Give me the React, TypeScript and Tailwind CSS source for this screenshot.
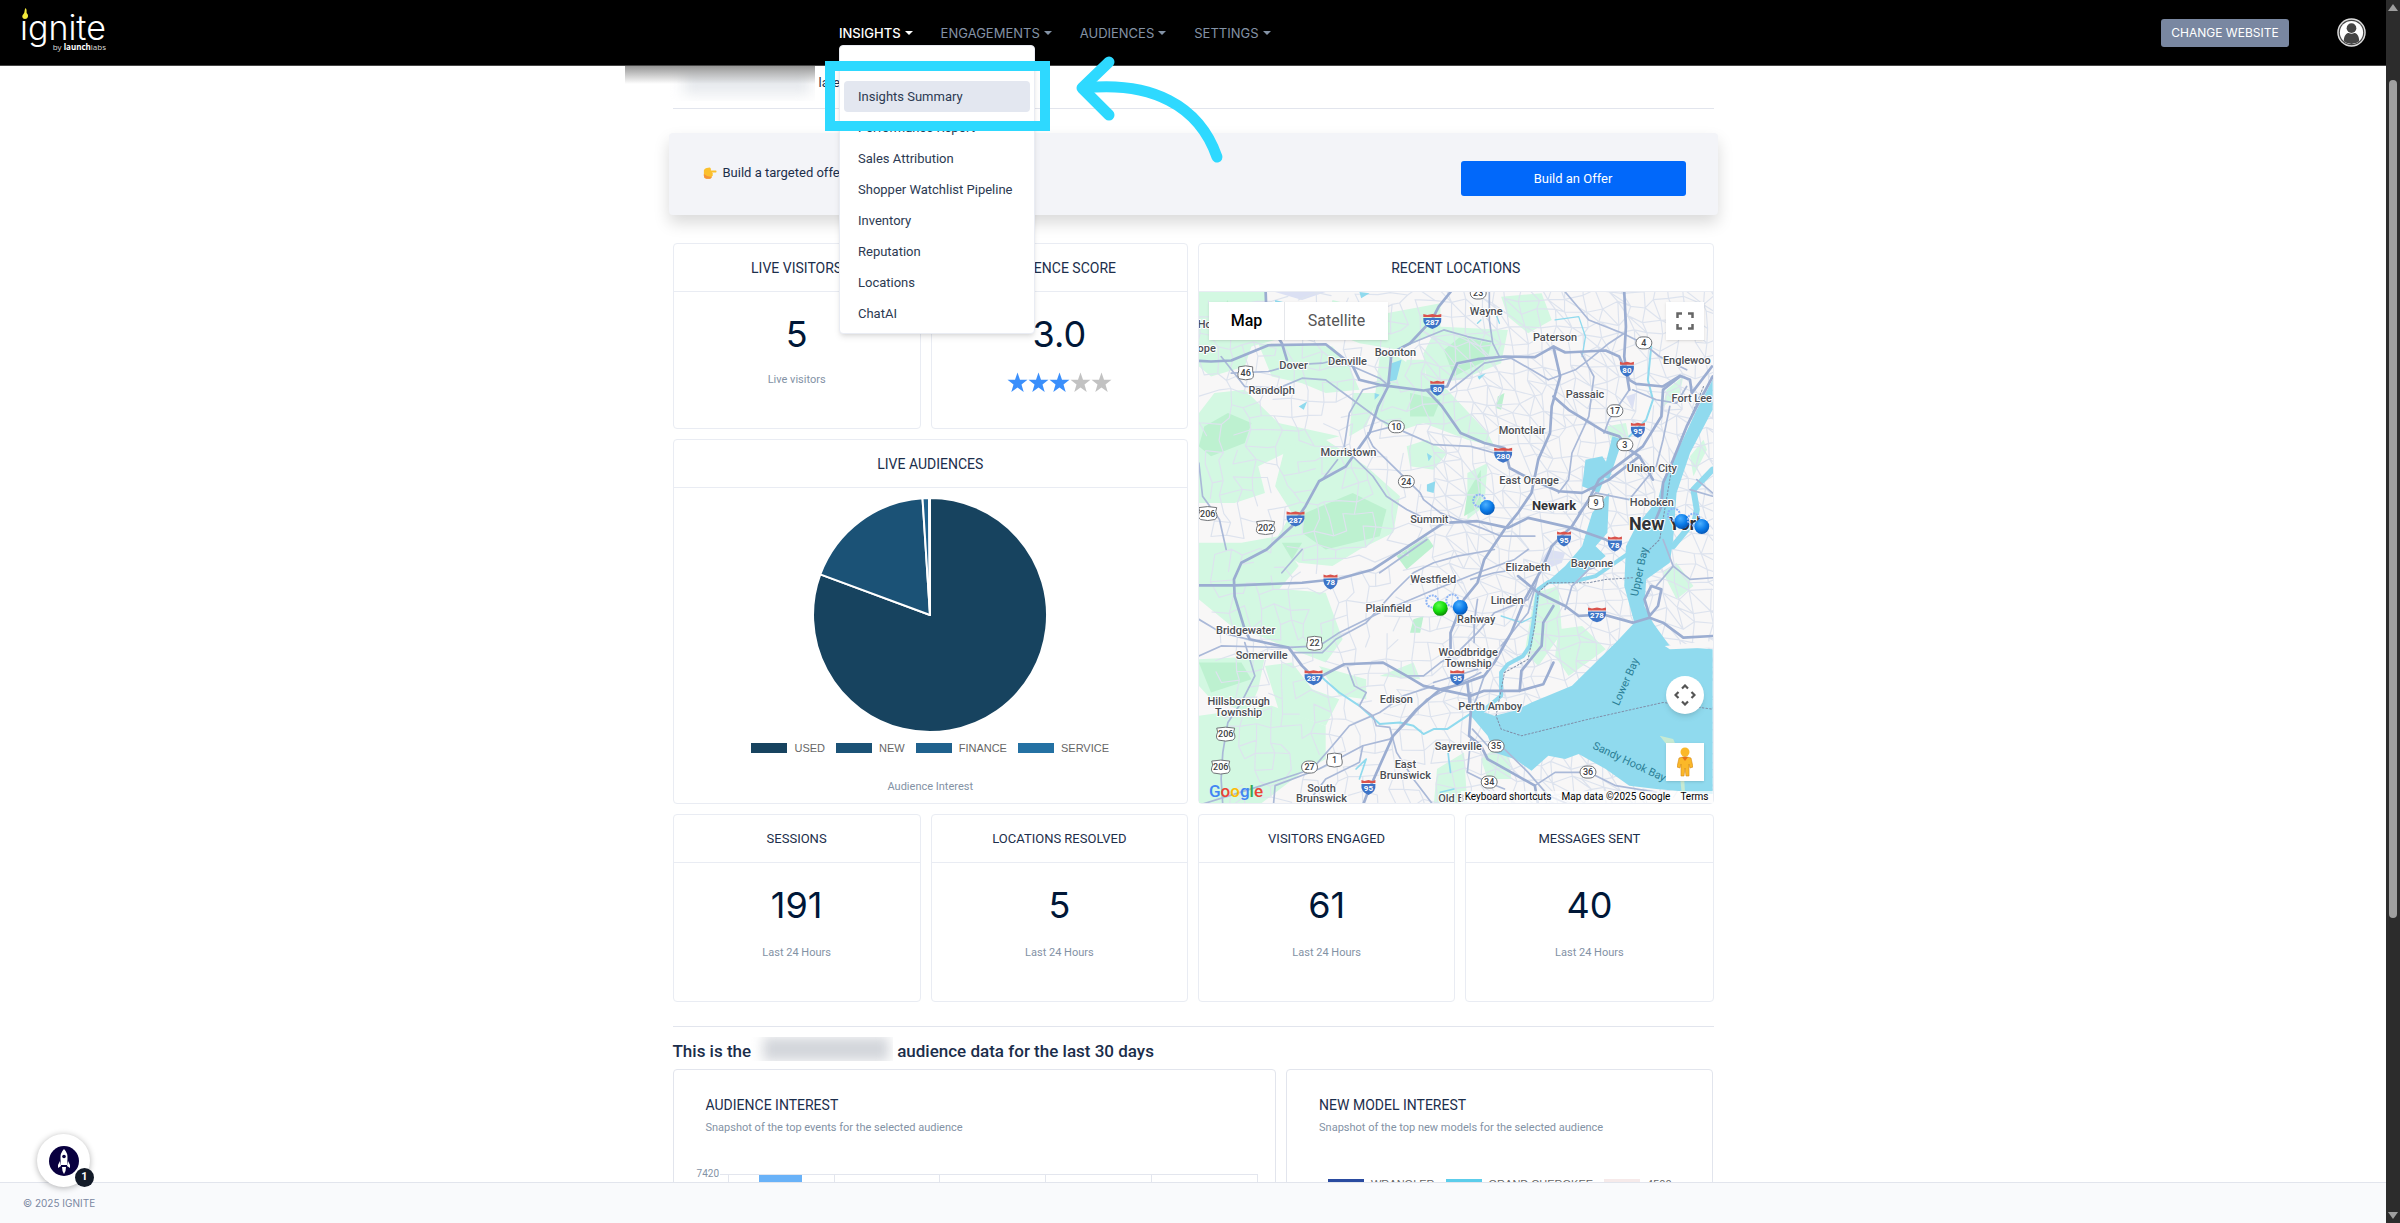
import type { ReactNode } from 'react';

const navItems = ['INSIGHTS', 'ENGAGEMENTS', 'AUDIENCES', 'SETTINGS'];

const menuItems = [
  'Live View',
  'Insights Summary',
  'Performance Report',
  'Sales Attribution',
  'Shopper Watchlist Pipeline',
  'Inventory',
  'Reputation',
  'Locations',
  'ChatAI',
];

const audiences = [
  { label: 'USED', swatch: 'bg-[#17435f]' },
  { label: 'NEW', swatch: 'bg-[#1b5276]' },
  { label: 'FINANCE', swatch: 'bg-[#1f618d]' },
  { label: 'SERVICE', swatch: 'bg-[#2471a3]' },
];

const models = [
  { label: 'WRANGLER', swatch: 'bg-[#2a4ba0]' },
  { label: 'GRAND CHEROKEE', swatch: 'bg-[#5ccdeb]' },
  { label: '4500', swatch: 'bg-[#f6eaea]' },
];

const stats = [
  { title: 'SESSIONS', value: '191' },
  { title: 'LOCATIONS RESOLVED', value: '5' },
  { title: 'VISITORS ENGAGED', value: '61' },
  { title: 'MESSAGES SENT', value: '40' },
];

// [name, x, y]
const towns: [string, number, number][] = [
  ['Ho', 6, 32],
  ['ope', 8, 56],
  ['Wayne', 288, 19],
  ['Paterson', 357, 45],
  ['Englewoo', 489, 68],
  ['Boonton', 197, 60],
  ['Denville', 149, 69],
  ['Dover', 95, 73],
  ['Randolph', 73, 98],
  ['Passaic', 387, 102],
  ['Fort Lee', 494, 106],
  ['Montclair', 324, 138],
  ['Morristown', 150, 160],
  ['Union City', 454, 176],
  ['East Orange', 331, 188],
  ['Hoboken', 454, 210],
  ['Summit', 231, 227],
  ['Elizabeth', 330, 276],
  ['Bayonne', 394, 272],
  ['Westfield', 235, 288],
  ['Linden', 309, 309],
  ['Plainfield', 190, 317],
  ['Rahway', 278, 328],
  ['Bridgewater', 47, 339],
  ['Somerville', 63, 364],
  ['Woodbridge', 270, 361],
  ['Township', 270, 372],
  ['Edison', 198, 408],
  ['Perth Amboy', 292, 415],
  ['Hillsborough', 40, 410],
  ['Township', 40, 421],
  ['Sayreville', 260, 455],
  ['East', 207, 473],
  ['Brunswick', 207, 484],
  ['South', 123, 497],
  ['Brunswick', 123, 507],
  ['Old B', 253, 507],
];

const interstates: [string, number, number][] = [
  ['287', 234, 29],
  ['80', 239, 96],
  ['80', 429, 77],
  ['95', 440, 138],
  ['280', 305, 163],
  ['287', 97, 227],
  ['95', 366, 247],
  ['78', 417, 252],
  ['78', 132, 290],
  ['278', 399, 323],
  ['287', 115, 386],
  ['95', 259, 386],
  ['95', 170, 496],
];

const stateRoutes: [string, number, number][] = [
  ['23', 280, 1],
  ['4', 446, 51],
  ['17', 417, 119],
  ['10', 198, 135],
  ['3', 427, 153],
  ['24', 208, 190],
  ['35', 298, 455],
  ['27', 111, 476],
  ['36', 390, 481],
  ['34', 291, 491],
];

const usRoutes: [string, number, number][] = [
  ['46', 47, 81],
  ['202', 67, 236],
  ['206', 9, 222],
  ['9', 398, 211],
  ['22', 116, 352],
  ['206', 27, 443],
  ['1', 136, 469],
  ['206', 22, 476],
];

const pins: [number, number, string][] = [
  [289, 215, 'url(#pinBlue)'],
  [484, 229, 'url(#pinBlue)'],
  [504, 234, 'url(#pinBlue)'],
  [262, 315, 'url(#pinBlue)'],
  [242, 316, 'url(#pinGreen)'],
];

const highways = [
  'M0 242 L60 245 L120 242 L230 196 L400 193 L440 225 L480 258 L500 300 L560 315 L690 332 L760 320 L790 250 L850 238 L930 230 L1020 232 L1075 200 L1110 218 L1230 212 L1270 230 L1300 300 L1320 312 L1400 320 L1450 288 L1480 300 L1485 340 L1545 260',
  'M770 36 L735 80 L715 120 L650 190 L595 220 L585 320 L555 380 L530 460 L460 560 L380 605 L340 680 L300 740 L225 810 L150 850 L128 900 L130 950 L160 1050 L175 1080 L290 1105 L330 1160 L370 1200 L455 1155 L570 1150 L640 1190 L690 1220 L830 1250 L870 1235 L975 1235 L1045 1215 L1075 1150',
  'M700 332 L745 380 L800 460 L870 490 L930 505 L945 565 L1010 600 L1090 635 L1160 640 L1240 600 L1330 530',
  'M24 918 L130 918 L330 910 L440 898 L540 870 L660 790 L750 730 L850 725 L940 745 L1000 715 L1130 745 L1230 780 L1260 800',
  'M1547 290 L1500 380 L1470 440 L1430 540 L1400 610 L1395 680 L1370 740',
  'M1285 36 L1290 140 L1285 230 L1295 300 L1300 330',
  'M1450 290 L1400 330 L1395 410 L1340 500 L1210 600 L1180 660 L1130 740 L1070 800 L1040 870 L990 960 L950 1060 L900 1150 L870 1190 L800 1215 L740 1230 L670 1290 L600 1370 L560 1460 L525 1540 L510 1580',
  'M1075 200 L1095 290 L1070 380 L1065 460 L1030 540 L1010 640 L970 700 L930 750 L870 840 L850 910 L810 960 L770 1060 L770 1110',
  'M1075 350 L1120 390 L1225 455 L1270 470 L1300 510 L1330 530 L1370 600',
  'M820 1210 L830 1300 L825 1370 L860 1400 L880 1440 L950 1480 L1020 1520 L1030 1580',
  'M970 890 L1030 940 L1110 980 L1150 1010 L1220 1005 L1310 1030 L1360 1015 L1400 1030 L1460 1075 L1547 1070',
  'M1360 1010 L1345 960 L1365 920 L1395 930 L1385 980 L1360 1010',
  'M975 1235 L980 1175 L1040 1100 L1045 1030 L1075 980',
  'M222 36 L225 120 L270 190 L285 240',
];

const roads = [
  'M90 230 L160 320 L260 325 L330 295 L400 300 L480 360 L560 420 L630 455 L720 495 L830 500 L900 520',
  'M120 280 L230 275 L300 255 L390 250 L430 240',
  'M590 230 L630 200 L690 175 L750 150 L820 170 L890 185',
  'M885 36 L885 120 L895 190 L915 230',
  'M770 330 L820 290 L870 250 L950 235 L1010 270 L1060 300 L1140 270 L1180 240 L1240 190 L1285 160',
  'M1110 36 L1180 120 L1280 160 L1340 190 L1390 230 L1470 270',
  'M1155 215 L1195 290 L1180 410 L1130 520 L1120 600 L1090 640',
  'M590 310 L510 330 L470 400 L455 500 L480 530 L540 590 L580 650 L640 690 L700 720',
  'M525 460 L560 450 L600 440 M525 470 L540 500 L600 560 L680 640 L690 660 L740 700 L790 720 L860 745 L920 770 L1020 770',
  'M430 240 L480 260 L560 295 L590 320',
  'M24 550 L35 650 L85 720 L105 810',
  'M24 1020 L90 1060 L170 1080 M24 1130 L90 1100 L280 1105 L380 1100 L440 1060 L560 1000 L700 940 L850 880 L960 840 L1000 810',
  'M300 1120 L390 1120 L430 1080 L520 1030 L600 940 L660 880 L720 850 L790 830 L900 810',
  'M640 1190 L690 1190 L740 1150 L790 1120 L850 1060 L900 1000 L1000 960 L1020 920',
  'M160 1090 L190 1190 L150 1270 L110 1330 L95 1420 L90 1500 L95 1580',
  'M20 1580 L210 1520 L360 1470 L420 1400 L470 1340 L560 1300 L630 1250 L720 1220',
  'M245 1580 L250 1520 L380 1470 L510 1400 L590 1380 L640 1330 L700 1260 L860 1180',
  'M340 1580 L400 1500 L500 1450 L510 1400 M465 1165 L485 1220 L520 1240 L500 1280 L540 1310 L550 1340 L590 1345 L610 1420 L660 1500 L720 1580',
  'M830 900 L900 880 L970 870 M850 960 L840 1030 L840 1090 M1030 890 L1000 1000 L920 1100',
  'M835 1350 L880 1400 L930 1410 L1000 1480 L1060 1550 L1130 1580 M830 1380 L820 1480 L880 1510 L930 1530',
  'M1020 1520 L1080 1480 L1180 1480 L1260 1520 L1380 1540',
  'M1300 330 L1240 420 L1225 460 M1310 330 L1380 360 L1440 370 L1470 320 M1420 380 L1400 480 L1380 560 L1300 660 L1200 640 L1150 700',
  'M1480 630 L1547 650 M1500 600 L1547 640 M1400 780 L1430 860 L1480 900 L1547 895 M1430 860 L1380 920',
  'M1110 990 L1130 920 L1180 870 L1240 850 M870 1190 L850 1250 L830 1300 L830 1240',
  'M435 540 L390 600 M270 880 L330 810 M720 1210 L850 1170 M560 880 L700 780',
];

const lightGreens = [
  'M24 36 L220 36 L250 180 L180 200 L160 260 L60 290 L24 260 Z',
  'M200 190 L420 200 L470 260 L500 330 L400 340 L330 310 L240 290 Z',
  'M24 400 L70 340 L160 330 L260 430 L440 470 L300 510 L200 560 L220 640 L130 670 L24 670 Z',
  'M280 500 L400 480 L520 560 L620 650 L600 760 L500 810 L420 860 L320 850 L240 800 L300 700 L250 620 Z',
  'M420 60 L580 100 L740 70 L740 150 L620 210 L500 190 L400 150 Z',
  'M560 230 L600 220 L760 330 L880 460 L900 500 L820 480 L690 430 L600 460 L540 400 Z',
  'M480 340 L560 340 L520 440 L470 470 Z',
  'M730 140 L940 150 L920 250 L800 300 L700 310 L690 220 Z',
  'M640 240 L700 240 L690 320 L620 320 Z',
  'M920 50 L1040 40 L1070 120 L1000 160 L940 110 Z',
  'M24 790 L150 790 L260 770 L320 860 L220 980 L250 1060 L120 1040 L24 960 Z',
  'M170 920 L400 940 L450 1080 L400 1150 L300 1110 L180 1060 Z',
  'M24 1140 L220 1130 L200 1230 L170 1300 L60 1260 L24 1220 Z',
  'M24 1310 L240 1280 L400 1340 L400 1440 L330 1480 L200 1580 L24 1580 Z',
  'M220 1160 L300 1150 L360 1230 L440 1260 L400 1340 L260 1290 Z',
  'M380 1160 L520 1200 L520 1260 L440 1250 Z',
  'M640 500 L700 480 L760 520 L720 570 L650 560 Z',
  'M820 580 L880 550 L870 680 L820 720 Z',
  'M1020 940 L1090 920 L1100 1060 L1030 1160 L990 1120 Z',
  'M1090 1050 L1160 1040 L1230 1110 L1120 1190 L1080 1130 Z',
  'M730 1470 L810 1420 L820 1580 L720 1580 Z',
  'M860 1440 L940 1380 L950 1500 L880 1500 Z',
  'M560 1190 L660 1150 L680 1200 Z',
  'M1230 440 L1290 430 L1300 480 L1250 490 Z',
  'M1410 330 L1460 290 L1450 340 L1400 380 Z',
  'M1480 530 L1520 480 L1530 510 L1490 590 Z',
  'M1400 880 L1440 850 L1490 920 L1440 960 Z',
];

const darkGreens = [
  'M40 440 L110 400 L180 430 L160 490 L60 530 L24 500 Z',
  'M340 700 L480 640 L580 690 L560 770 L400 810 L330 760 Z',
  'M750 210 L800 170 L890 190 L880 240 L780 290 Z',
  'M650 340 L740 360 L720 410 L650 410 Z',
  'M24 1150 L150 1150 L180 1200 L60 1240 Z',
  'M610 830 L700 770 L720 800 L640 870 Z',
  'M820 640 L860 570 L860 680 L810 710 Z',
  'M80 100 L110 60 L120 120 L90 170 Z',
  'M660 1020 L690 1010 L680 1060 L650 1060 Z',
  'M270 790 L330 790 L300 840 Z',
  'M910 350 L930 340 L920 390 L905 385 Z',
];

// jittered street mesh that sits under the main roads
function streetMesh() {
  let seed = 7;
  const rand = () => {
    seed = (seed * 16807) % 2147483647;
    return seed / 2147483647;
  };
  const step = 44;
  const cols = 37;
  const rows = 37;
  const nodes: number[][][] = [];
  for (let r = 0; r < rows; r++) {
    const line: number[][] = [];
    for (let c = 0; c < cols; c++) {
      line.push([c * step + rand() * 30 + r * 3, r * step + rand() * 30 - c * 3 + 60]);
    }
    nodes.push(line);
  }
  let d = '';
  for (let r = 0; r < rows - 1; r++) {
    for (let c = 0; c < cols - 1; c++) {
      const keep = c > 14 ? 0.92 : 0.6;
      const [x, y] = nodes[r][c];
      if (rand() < keep) d += `M${x | 0} ${y | 0}L${nodes[r][c + 1][0] | 0} ${nodes[r][c + 1][1] | 0}`;
      if (rand() < keep) d += `M${x | 0} ${y | 0}L${nodes[r + 1][c][0] | 0} ${nodes[r + 1][c][1] | 0}`;
      if (c > 14 && rand() < 0.5) d += `M${x | 0} ${y | 0}L${nodes[r + 1][c + 1][0] | 0} ${nodes[r + 1][c + 1][1] | 0}`;
    }
  }
  return d;
}

const streets = streetMesh();

const MapDrawing = () => (
  <svg viewBox="0 0 515 512" preserveAspectRatio="xMidYMid slice" className="absolute inset-0 h-full w-full font-[Roboto,sans-serif]">
    <defs>
      <radialGradient id="pinBlue" cx="0.4" cy="0.3" r="0.7">
        <stop offset="0" stopColor="#4db1ff" />
        <stop offset="0.6" stopColor="#0a7be8" />
        <stop offset="1" stopColor="#0558b8" />
      </radialGradient>
      <radialGradient id="pinGreen" cx="0.4" cy="0.3" r="0.7">
        <stop offset="0" stopColor="#5dff4d" />
        <stop offset="0.6" stopColor="#14dc0a" />
        <stop offset="1" stopColor="#0a8c05" />
      </radialGradient>
    </defs>
    <rect width="515" height="512" fill="#f8f7f7" />
    <g transform="translate(-8 -12) scale(0.338 0.3333)" fill="none" strokeLinejoin="round" strokeLinecap="round">
      {lightGreens.map((d) => (
        <path key={d} d={d} fill="#d3f8e2" />
      ))}
      {darkGreens.map((d) => (
        <path key={d} d={d} fill="#bdf1d0" />
      ))}
      <path d="M250 36 L400 36 L330 60 Z M1040 840 L1060 810 L1110 820 L1100 850 L1050 870 Z M1290 350 L1320 340 L1310 390 Z" fill="#dbe0f3" />
      <path d={streets} stroke="#dde3ee" strokeWidth="3.500" />
      <g fill="#90daee">
        <path d="M1547 300 L1500 390 L1440 520 L1400 600 L1385 660 L1320 740 L1290 800 L1285 920 L1315 1030 L1260 1090 L1200 1150 L1130 1220 L1010 1270 L960 1295 L900 1310 L840 1290 L830 1310 L880 1370 L900 1420 L960 1440 L1010 1475 L1060 1430 L1110 1440 L1150 1425 L1230 1470 L1300 1520 L1380 1530 L1547 1545 L1547 1110 L1420 1100 L1370 1030 L1345 980 L1350 900 L1420 850 L1430 780 L1440 640 L1480 520 L1547 390 Z" />
        <path d="M1190 700 L1240 640 L1235 760 L1200 800 L1230 830 L1140 905 L1060 905 L1110 860 L1160 800 Z" />
        <path d="M1170 540 L1220 530 L1240 560 L1210 640 L1160 620 Z M1250 470 L1280 480 L1240 600 L1220 590 Z" />
        <path d="M595 250 L625 240 L610 300 L588 305 Z M250 60 L330 80 L300 90 L250 80 Z M320 380 L345 365 L335 390 Z M700 520 L715 530 L705 545 Z M500 36 L530 40 L505 55 Z M850 290 L875 280 L855 300 Z M700 615 L725 605 L720 640 L700 635 Z M545 340 L560 345 L545 360 Z" />
      </g>
      <g stroke="#90daee">
        <path d="M1300 820 L1200 890 L1140 905 L1060 908 L1030 930 L1020 1000 L1005 1100 L985 1130 L940 1155 L920 1180 L920 1250 L860 1300" strokeWidth="12" />
        <path d="M850 1290 L790 1330 L760 1350 L720 1350 L690 1365 L660 1340 L620 1330 L560 1335 L500 1280 L440 1240 L400 1205 L385 1190" strokeWidth="6" />
        <path d="M1430 800 L1495 720 L1500 690 L1490 630 L1547 570" strokeWidth="18" />
        <path d="M1365 200 L1355 300 L1370 360 L1350 420 L1300 470" strokeWidth="6" />
        <path d="M1080 120 L1150 110 L1170 170 L1160 230 M900 90 L915 130 M860 120 L850 130 M920 1010 L980 1030 L1020 1010" strokeWidth="4" />
        <path d="M490 1470 L520 1440 L500 1500 M760 1400 L770 1480 M740 1540 L780 1530" strokeWidth="5" />
      </g>
      <path d="M1405 1100 L1547 1085 L1547 1105 L1420 1110 Z" fill="#f8f7f7" />
      <path d="M1390 1370 L1430 1380 L1460 1450 L1465 1540 L1455 1540 L1445 1440 Z" fill="#c7ead2" />
      <path d="M1520 320 L1430 540 L1390 780 L1340 830 M1310 895 L1230 900 L1180 910 L1060 910 L1030 940 L1020 1040 L1000 1140 L930 1180 L905 1310 L920 1350 L980 1370 L1180 1320 L1400 1270 L1547 1290" stroke="#7f8ea8" strokeWidth="3" strokeDasharray="5 6" />
      <g stroke="#aab9d8" strokeWidth="5">
        {roads.map((d) => (
          <path key={d} d={d} />
        ))}
      </g>
      <g stroke="#9badd1" strokeWidth="8">
        {highways.map((d) => (
          <path key={d} d={d} />
        ))}
      </g>
    </g>
    {interstates.map(([n, x, y]) => (
      <g key={`i${x}-${y}`} transform={`translate(${x} ${y})`}>
        <path d={n.length > 2 ? 'M-9 -3 H9 Q10 5 0 8 Q-10 5 -9 -3 Z' : 'M-7 -3 H7 Q8 5 0 8 Q-8 5 -7 -3 Z'} fill="#3d74c7" />
        <path d={n.length > 2 ? 'M-9 -4 V-7 L-5 -6 L0 -7 L5 -6 L9 -7 V-4 Z' : 'M-7 -4 V-7 L-4 -6 L0 -7 L4 -6 L7 -7 V-4 Z'} fill="#d9534c" />
        <text y="4" textAnchor="middle" fontSize="8" fontWeight="700" fill="#fff">
          {n}
        </text>
      </g>
    ))}
    {stateRoutes.map(([n, x, y]) => (
      <g key={`s${x}-${y}`} transform={`translate(${x} ${y})`}>
        <rect x="-8" y="-6" width="16" height="12" rx="6" fill="#fff" stroke="#6f7276" />
        <text y="3" textAnchor="middle" fontSize="9" fontWeight="500" fill="#3c4043">
          {n}
        </text>
      </g>
    ))}
    {usRoutes.map(([n, x, y]) => (
      <g key={`u${x}-${y}`} transform={`translate(${x} ${y})`}>
        <path d={n.length > 2 ? 'M-9 -6 L0 -7 L9 -6 L8 -2 Q11 4 7 6 L0 7 L-7 6 Q-11 4 -8 -2 Z' : 'M-7 -6 L0 -7 L7 -6 L7 -2 Q9 4 6 6 L0 7 L-6 6 Q-9 4 -7 -2 Z'} fill="#fff" stroke="#6f7276" />
        <text y="3" textAnchor="middle" fontSize="9" fontWeight="500" fill="#3c4043">
          {n}
        </text>
      </g>
    ))}
    <g fill="#4b4e54" stroke="#fff" strokeWidth="2" paintOrder="stroke" strokeLinejoin="round" textAnchor="middle" fontSize="11" fontWeight="500">
      {towns.map(([name, x, y]) => (
        <text key={`${name}-${x}-${y}`} x={x} y={y + 4}>
          {name}
        </text>
      ))}
      <text x="356" y="218" fontSize="13" fontWeight="700" fill="#303236">
        Newark
      </text>
      <text x="431" y="238" textAnchor="start" fontSize="18" fontWeight="700" fill="#303236">
        New York
      </text>
    </g>
    <g fill="#2b7f96" textAnchor="middle" fontSize="11">
      <text transform="translate(445 281) rotate(-78)">Upper Bay</text>
      <text transform="translate(431 392) rotate(-66)">Lower Bay</text>
      <text transform="translate(430 474) rotate(25)">Sandy Hook Bay</text>
    </g>
    {pins.map(([x, y, fill]) => (
      <g key={`p${x}`}>
        <circle cx={x - 8} cy={y - 6} r="6" fill="none" stroke="#8db4f5" strokeWidth="2" strokeDasharray="2 1" />
        <circle cx={x} cy={y + 1} r="7.500" fill={fill} />
      </g>
    ))}
  </svg>
);

const LocationMap = () => (
  <div className="relative flex-1 overflow-hidden font-[Roboto,sans-serif]">
    <MapDrawing />
    <div className="absolute top-2.5 left-2.5 flex h-[38px] bg-white text-base shadow-sm">
      <button className="w-[75px] font-medium text-black">Map</button>
      <button className="w-[104px] border-l border-gray-200 text-[#565656]">Satellite</button>
    </div>
    <button aria-label="Toggle fullscreen view" className="absolute top-2.5 right-[9px] flex size-[38px] items-center justify-center bg-white shadow-sm">
      <svg viewBox="0 0 18 18" className="size-[18px]" fill="none" stroke="#666" strokeWidth="2.500">
        <path d="M1.500 6 V1.500 H6 M12 1.500 H16.500 V6 M16.500 12 V16.500 H12 M6 16.500 H1.500 V12" />
      </svg>
    </button>
    <button aria-label="Map camera controls" className="absolute right-[9px] bottom-[89px] flex size-[38px] items-center justify-center rounded-full bg-white shadow-md">
      <svg viewBox="0 0 22 22" className="size-[22px]" fill="none" stroke="#555" strokeWidth="2.200">
        <path d="M8 4.500 L11 1.500 L14 4.500 M8 17.500 L11 20.500 L14 17.500 M4.500 8 L1.500 11 L4.500 14 M17.500 8 L20.500 11 L17.500 14" />
      </svg>
    </button>
    <button aria-label="Street View" className="absolute right-[9px] bottom-[22px] flex size-[38px] items-center justify-center bg-white shadow-sm">
      <svg viewBox="0 0 16 30" className="h-[30px] w-4">
        <circle cx="8" cy="5" r="4.500" fill="#fbb829" />
        <path d="M2 11 Q8 8 14 11 L16 20 L13 21 L12 17 V29 H9 L8 21 L7 29 H4 V17 L3 21 L0 20 Z" fill="#fbb829" stroke="#d58a1a" strokeWidth="0.600" />
        <path d="M5 10 L8 14 L11 10 Z" fill="#e8711a" />
      </svg>
    </button>
    <div className="absolute bottom-0 left-2.5 text-[17px] leading-6 font-medium">
      <span className="text-[#4285f4]">G</span>
      <span className="text-[#ea4335]">o</span>
      <span className="text-[#fbbc05]">o</span>
      <span className="text-[#4285f4]">g</span>
      <span className="text-[#34a853]">l</span>
      <span className="text-[#ea4335]">e</span>
    </div>
    <div className="absolute right-0 bottom-0 flex gap-2.5 bg-white/70 px-1 text-[10px] leading-[12px] text-black">
      <button>Keyboard shortcuts</button>
      <span>Map data ©2025 Google</span>
      <a href="#terms">Terms</a>
    </div>
  </div>
);

const Card = ({ title, compact = false, className = '', children }: { title: string; compact?: boolean; className?: string; children: ReactNode }) => (
  <section className={`flex flex-col rounded-[4px] border border-[#e9ecf3] bg-white ${className}`}>
    <h2 className={`border-b border-[#e9ecf3] pt-3.5 pb-[13px] text-center leading-5 text-[#1b2e4b] ${compact ? 'text-[13px]' : 'text-sm'}`}>{title}</h2>
    {children}
  </section>
);

const BigNumber = ({ children }: { children: ReactNode }) => (
  <p className="pt-5 text-center font-[Inter,sans-serif] text-4xl leading-[44px] text-[#001737]">{children}</p>
);

const Caption = ({ children }: { children: ReactNode }) => <p className="text-center text-[11px] leading-4 text-[#8392a5]">{children}</p>;

const Legend = ({ items }: { items: { label: string; swatch: string }[] }) => (
  <ul className="flex justify-center gap-[11px] font-['Liberation_Sans',sans-serif] text-[11px] leading-4 text-[#666]">
    {items.map((item) => (
      <li key={item.label} className="flex items-center gap-[7px]">
        <span className={`h-2.5 w-9 ${item.swatch}`} />
        {item.label}
      </li>
    ))}
  </ul>
);

const AudiencePie = () => (
  <svg viewBox="-117 -117 234 234" className="mx-auto h-[234px] w-[234px]" stroke="#fff" strokeWidth="2" strokeLinejoin="round">
    <path d="M0 0 L0 -117 A117 117 0 1 1 -109.700 -40.600 Z" fill="#17435f" />
    <path d="M0 0 L-109.700 -40.600 A117 117 0 0 1 -7.500 -116.800 Z" fill="#1b5276" />
    <path d="M0 0 L-7.500 -116.800 A117 117 0 0 1 -1 -117 Z" fill="#1f618d" />
    <path d="M0 0 L-1 -117 A117 117 0 0 1 0 -117 Z" fill="#2471a3" />
  </svg>
);

const Logo = () => (
  <svg viewBox="0 0 90 56" className="h-14 w-[90px]" role="img" aria-label="ignite by launchlabs">
    <text x="-1" y="35" fontFamily="Inter, sans-serif" fontWeight="300" fontSize="34" fill="#fff">
      ignite
    </text>
    <rect x="0" y="0" width="8" height="16" fill="#000" />
    <path d="M4.500 3 C6.500 5 5 7 6 8.500 C8 10.500 7 14 4 14 C1 14 0.500 10.500 2.500 9 C4 7.500 3 5.500 4.500 3 Z" fill="#f3ea3a" />
    <text x="85" y="45" textAnchor="end" fontFamily="'Open Sans', sans-serif" fontSize="8" fill="#ddd">
      by <tspan fontWeight="700" fill="#fff">launch</tspan>labs
    </text>
  </svg>
);

const InsightsMenu = () => (
  <ul className="absolute top-full left-0 z-20 mt-0.5 w-[196px] rounded-[4px] border border-[#e9ecf3] bg-white p-1 font-[Roboto,sans-serif] text-[13px] leading-[21px] text-[#2c3a52] shadow-md">
    {menuItems.map((item) => (
      <li key={item}>
        <a
          href="#insights"
          className={
            item === 'Insights Summary'
              ? 'block rounded-[4px] bg-[#e3e7f0] px-[14px] py-[5px] whitespace-nowrap'
              : 'block px-[14px] py-[5px] whitespace-nowrap'
          }
        >
          {item}
        </a>
      </li>
    ))}
    {/* callout frame and arrow around the second entry */}
    <li aria-hidden="true" className="pointer-events-none absolute top-[15px] -left-[15px] h-[70px] w-[225px] border-[10px] border-[#2ed9ff]" />
    <li aria-hidden="true" className="pointer-events-none absolute top-[9px] left-[234px]">
      <svg viewBox="0 0 150 112" className="h-[112px] w-[150px]" fill="none" stroke="#2ed9ff" strokeWidth="11" strokeLinecap="round" strokeLinejoin="round">
        <path d="M35 7 L8 33 L35 60" />
        <path d="M10 33 C77 26 125 50 143 102" />
      </svg>
    </li>
  </ul>
);

const Header = () => (
  <header className="relative z-10 flex h-[66px] shrink-0 items-center border-b border-[#444] bg-black font-[Inter,sans-serif]">
    <div className="w-[839px] shrink-0 pl-[21px]">
      <Logo />
    </div>
    <nav className="flex flex-1 gap-7">
      {navItems.map((item, i) => (
        <div key={item} className="relative">
          <button
            className={
              i === 0
                ? 'flex items-center gap-1 text-[13px] leading-5 font-medium text-white'
                : 'flex items-center gap-1 text-[13px] leading-5 text-[#8392a5]'
            }
          >
            {item}
            <span className="border-x-4 border-t-4 border-x-transparent border-t-current" />
          </button>
          {i === 0 && <InsightsMenu />}
        </div>
      ))}
    </nav>
    <button className="mr-12 h-7 w-32 rounded-[3px] bg-[#7987a1] text-xs text-white">CHANGE WEBSITE</button>
    <button aria-label="Account" className="mr-5">
      <svg viewBox="0 0 30 30" className="size-[29px]">
        <circle cx="15" cy="15" r="14" fill="#444" stroke="#ddd" strokeWidth="1.500" />
        <circle cx="15" cy="15" r="12" fill="#fff" />
        <circle cx="15" cy="10.500" r="5" fill="#444" />
        <path d="M7 24 C7 18 10 15.500 12 15.500 Q15 17 18 15.500 C20 15.500 23 18 23 24 Q15 30 7 24 Z" fill="#444" />
      </svg>
    </button>
  </header>
);

const OfferBanner = () => (
  <div className="-mx-1 mt-6 flex h-[82px] items-start justify-between rounded-[4px] bg-[#f3f4f8] pt-7 pr-8 pl-[34px] text-[13px] shadow-[0_8px_16px_rgba(0,0,0,0.15)]">
    <p className="flex items-center gap-1.5 leading-6 text-[#1b2e4b]">
      <svg viewBox="0 0 16 16" className="size-[14px]">
        <path d="M1 5 Q2 2 6 2 Q8 1 9 3 L9 5 H15 Q16 6 15 7.500 H10 Q12 8 11 9.500 Q12 11 10 12 Q10 14 8 14.500 H4 Q1 14 1 11 Z" fill="#fbc02d" />
        <path d="M1 11 Q1 14 4 14.500 H8 Q10 14 10 12 Q6 13 1 9 Z" fill="#f5943a" />
      </svg>
      Build a targeted offer
    </p>
    <button className="h-[35px] w-[225px] rounded-[3px] bg-[#0168fa] text-white">Build an Offer</button>
  </div>
);

const InterestChart = () => (
  <svg width="575" height="200" className="mt-8 ml-4" fontFamily="Roboto, sans-serif">
    <text x="29" y="9" textAnchor="end" fontSize="10" fill="#8392a5">
      7420
    </text>
    <path d="M30 6.500 H568 M38.500 6 V200 M144.500 6 V200 M249.500 6 V200 M355.500 6 V200 M461.500 6 V200 M567.500 6 V200" stroke="#e3e6ee" fill="none" />
    <rect x="69" y="7" width="43" height="193" fill="#69b2f8" />
  </svg>
);

const ChatLauncher = () => (
  <button aria-label="Open help" className="absolute bottom-9 left-[37px] z-10 flex size-[53px] items-center justify-center rounded-full bg-white shadow-[0_1px_6px_rgba(0,0,0,0.3)]">
    <svg viewBox="0 0 30 30" className="size-[30px]">
      <circle cx="15" cy="15" r="15" fill="#09003f" />
      <path d="M15 3 Q19 7 18.500 13 L18 19 H12 L11.500 13 Q11 7 15 3 Z M11 15 L9 19 V22 L12 20 Z M19 15 L21 19 V22 L18 20 Z M13 21 H17 L16.500 25 L15 28 L13.500 25 Z" fill="#fff" />
      <circle cx="15" cy="10.500" r="1.800" fill="#09003f" />
    </svg>
    <span className="absolute -right-1 bottom-0 flex size-[19px] items-center justify-center rounded-full bg-[#121a28] text-[11px] font-bold text-white">1</span>
  </button>
);

const Scrollbar = () => (
  <div aria-hidden="true" className="flex w-[14px] shrink-0 flex-col items-center justify-between bg-[#2c2c2c] py-1">
    <span className="border-x-[5px] border-b-[7px] border-x-transparent border-b-[#9f9f9f]" />
    <span className="mt-[69px] h-[838px] w-2 rounded-full bg-[#9f9f9f]" />
    <span className="mt-auto border-x-[5px] border-t-[7px] border-x-transparent border-t-[#9f9f9f]" />
  </div>
);

const App = () => (
  <div className="flex h-screen overflow-hidden bg-white font-[Roboto,sans-serif]">
    <div className="relative flex min-w-0 flex-1 flex-col">
      <Header />
      <main className="min-h-0 flex-1 overflow-hidden">
        <div className="mx-auto max-w-[1041px]">
          <div className="relative flex h-[43px] border-b border-[#e2e5ed] pt-[7px] pl-[146px] text-[13px] text-[#1b2e4b]">
            <div className="absolute top-0 -left-12 h-[35px] w-[190px] overflow-hidden">
              <div className="absolute top-1 right-1 h-6 w-32 bg-[#e6e9ed] blur-[7px]" />
              <div className="absolute inset-x-0 top-0 h-[18px] bg-linear-to-b from-[#969696] to-transparent" />
            </div>
            latest
          </div>

          <OfferBanner />

          <div className="mt-7 grid grid-cols-[248fr_257fr_257fr_248fr] gap-2.5">
            <Card title="LIVE VISITORS">
              <BigNumber>5</BigNumber>
              <div className="pt-4 pb-10">
                <Caption>Live visitors</Caption>
              </div>
            </Card>
            <Card title="AUDIENCE SCORE">
              <BigNumber>3.0</BigNumber>
              <div className="flex justify-center pt-4">
                {[1, 2, 3, 4, 5].map((n) => (
                  <svg key={n} viewBox="0 0 21 20" className="h-[21px] w-[21px]">
                    <path d="M10.500 0 L13 7.300 H20.500 L14.500 12 L16.700 19.500 L10.500 15 L4.300 19.500 L6.500 12 L0.500 7.300 H8 Z" fill={n < 4 ? '#3b8ffb' : '#c2c2c2'} />
                  </svg>
                ))}
              </div>
            </Card>
            <Card title="RECENT LOCATIONS" className="col-span-2 row-span-2">
              <LocationMap />
            </Card>
            <Card title="LIVE AUDIENCES" className="col-span-2">
              <div className="space-y-2 pt-2.5">
                <AudiencePie />
                <Legend items={audiences} />
              </div>
              <div className="pt-[23px] pb-2">
                <Caption>Audience Interest</Caption>
              </div>
            </Card>
            {stats.map((stat) => (
              <Card key={stat.title} title={stat.title} compact>
                <BigNumber>{stat.value}</BigNumber>
                <div className="pt-[18px] pb-10">
                  <Caption>Last 24 Hours</Caption>
                </div>
              </Card>
            ))}
          </div>

          <h1 className="mt-6 flex items-center border-t border-[#e2e5ed] pt-3 pb-1.5 text-[17px] leading-6 font-medium text-[#1b2e4b]">
            This is the
            <span className="-mt-1 mr-1 h-6 w-[142px] overflow-hidden">
              <span className="mr-1 ml-3 block h-6 bg-[#d3d6db] blur-[6px]" />
            </span>
            audience data for the last 30 days
          </h1>

          <div className="grid grid-cols-[603fr_427fr] gap-2.5">
            <section className="rounded-[4px] border border-[#e2e5ed] pt-[25px]">
              <h2 className="px-8 text-sm leading-5 text-[#1b2e4b]">AUDIENCE INTEREST</h2>
              <p className="mt-[5px] px-8 text-[11px] leading-4 text-[#8392a5]">Snapshot of the top events for the selected audience</p>
              <InterestChart />
            </section>
            <section className="rounded-[4px] border border-[#e2e5ed] pt-[25px]">
              <h2 className="px-8 text-sm leading-5 text-[#1b2e4b]">NEW MODEL INTEREST</h2>
              <p className="mt-[5px] mb-10 px-8 text-[11px] leading-4 text-[#8392a5]">Snapshot of the top new models for the selected audience</p>
              <Legend items={models} />
            </section>
          </div>
        </div>
      </main>
      <footer className="flex h-[41px] shrink-0 items-center border-t border-[#e2e5ed] bg-[#f9fafc] pl-[23px] font-[Inter,sans-serif] text-[10px] text-[#7987a1]">
        © 2025 IGNITE
      </footer>
      <ChatLauncher />
    </div>
    <Scrollbar />
  </div>
);

export default App;
